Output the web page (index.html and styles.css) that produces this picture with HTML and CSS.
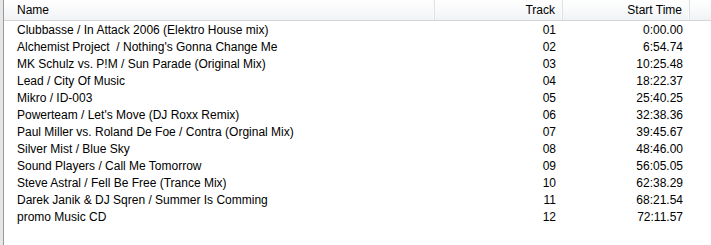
FILE: index.html
```html
<!DOCTYPE html>
<html>
<head>
<meta charset="utf-8">
<link rel="stylesheet" href="styles.css">
</head>
<body>
<div class="frame">
  <div class="list">
    <div class="head">
      <div class="hc name">Name</div>
      <div class="hc num">Track</div>
      <div class="hc num">Start Time</div>
      <div class="hc fill"></div>
    </div>
    <div class="rows">
      <div class="row"><span class="c name">Clubbasse / In Attack 2006 (Elektro House mix)</span><span class="c num">01</span><span class="c num">0:00.00</span></div>
      <div class="row"><span class="c name">Alchemist Project&nbsp; / Nothing's Gonna Change Me</span><span class="c num">02</span><span class="c num">6:54.74</span></div>
      <div class="row"><span class="c name">MK Schulz vs. P!M / Sun Parade (Original Mix)</span><span class="c num">03</span><span class="c num">10:25.48</span></div>
      <div class="row"><span class="c name">Lead / City Of Music</span><span class="c num">04</span><span class="c num">18:22.37</span></div>
      <div class="row"><span class="c name">Mikro / ID-003</span><span class="c num">05</span><span class="c num">25:40.25</span></div>
      <div class="row"><span class="c name">Powerteam / Let's Move (DJ Roxx Remix)</span><span class="c num">06</span><span class="c num">32:38.36</span></div>
      <div class="row"><span class="c name">Paul Miller vs. Roland De Foe / Contra (Orginal Mix)</span><span class="c num">07</span><span class="c num">39:45.67</span></div>
      <div class="row"><span class="c name">Silver Mist / Blue Sky</span><span class="c num">08</span><span class="c num">48:46.00</span></div>
      <div class="row"><span class="c name">Sound Players / Call Me Tomorrow</span><span class="c num">09</span><span class="c num">56:05.05</span></div>
      <div class="row"><span class="c name">Steve Astral / Fell Be Free (Trance Mix)</span><span class="c num">10</span><span class="c num">62:38.29</span></div>
      <div class="row"><span class="c name">Darek Janik &amp; DJ Sqren / Summer Is Comming</span><span class="c num">11</span><span class="c num">68:21.54</span></div>
      <div class="row"><span class="c name">promo Music CD</span><span class="c num">12</span><span class="c num">72:11.57</span></div>
    </div>
  </div>
</div>
</body>
</html>
```
FILE: styles.css
```css
html, body {
  margin: 0;
  padding: 0;
  background: #ffffff;
}
body {
  width: 711px;
  height: 245px;
  overflow: hidden;
  font-family: "Liberation Sans", Arial, sans-serif;
  font-size: 12px;
  color: #000;
}
.frame {
  height: 245px;
  padding-left: 3px;
  background: #e6e6e6;
}
.list {
  height: 245px;
  border-left: 1px solid #9a9a9a;
  background: #fff;
}
.head {
  display: grid;
  grid-template-columns: 431px 128px 127px 1fr;
  height: 20px;
  border-bottom: 1px solid #d5d5d5;
  background: linear-gradient(#ffffff, #f7f8f9 60%, #f1f2f4);
}
.hc {
  line-height: 20px;
  border-right: 1px solid #dfe1e4;
  box-shadow: inset -1px 0 0 #fbfbfb;
  white-space: nowrap;
}
.hc.fill { border-right: none; box-shadow: none; }
.rows {
  padding-top: 1px;
}
.row {
  display: grid;
  grid-template-columns: 431px 128px 127px;
  height: 17px;
  line-height: 17px;
}
.c, .hc { white-space: nowrap; overflow: hidden; }
.name { padding-left: 13px; }
.num { text-align: right; padding-right: 7px; }
```
